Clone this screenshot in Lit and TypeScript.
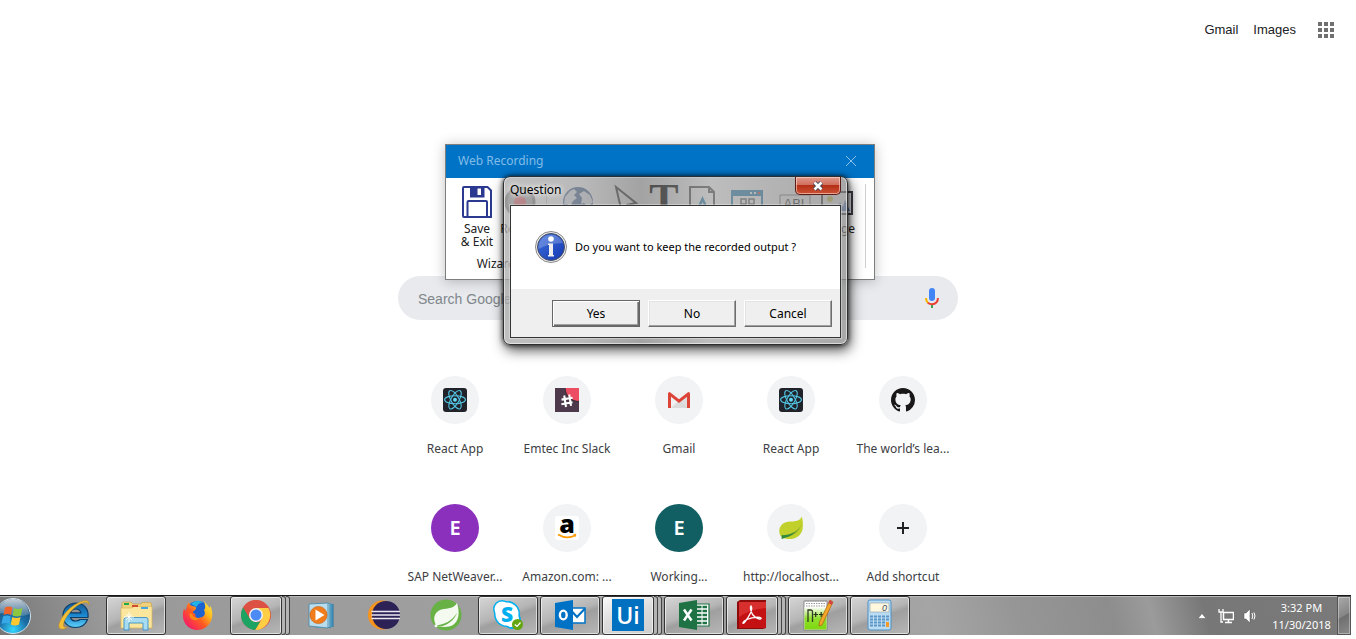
import { LitElement, html, css, svg, nothing } from "lit";
import { customElement, property } from "lit/decorators.js";
import { classMap } from "lit/directives/class-map.js";

/* ---------- shortcut icons ---------- */

const reactIcon = html`<svg width="24" height="24" viewBox="0 0 24 24" aria-hidden="true">
  <rect width="24" height="24" rx="3" fill="#20232a" />
  <g fill="none" stroke="#53c7e6" stroke-width="1.1">
    <ellipse cx="12" cy="11.7" rx="10.4" ry="4" />
    <ellipse cx="12" cy="11.7" rx="10.4" ry="4" transform="rotate(60 12 11.7)" />
    <ellipse cx="12" cy="11.7" rx="10.4" ry="4" transform="rotate(120 12 11.7)" />
  </g>
  <circle cx="12" cy="11.7" r="2" fill="#61dafb" />
</svg>`;

const slackIcon = html`<svg width="24" height="24" viewBox="0 0 24 24" aria-hidden="true">
  <rect width="24" height="24" fill="#4d394b" />
  <path d="M9.800 0H24V14A14 14 0 0 1 9.800 0z" fill="#3a2b39" />
  <path d="M10.600 0H24V13A13.300 13.300 0 0 1 10.600 0z" fill="#ed4d62" />
  <path d="M9.200 7.500 11 19M14.200 6.500 16 17.800M6.500 11.600 17.600 9.700M6.400 16.200 17.500 14.200" stroke="#fff" stroke-width="2.100" fill="none" />
</svg>`;

const gmailIcon = html`<svg width="24" height="24" viewBox="0 0 24 24" aria-hidden="true">
  <path d="M2.500 4.500h19V20h-19z" fill="#f1efef" />
  <path d="M4 20 12 12.500 20 20z" fill="#dcdbdb" />
  <path d="M12 13 21 6v14h-2z" fill="#d3d1d1" opacity=".6" />
  <path d="M1 20V5.500Q1 4 2.700 4L12 11.300 21.300 4Q23 4 23 5.500V20H20V8.800L12 15 4 8.800V20z" fill="#db4437" />
</svg>`;

const githubIcon = html`<svg width="24" height="24" viewBox="0 0 16 16" aria-hidden="true">
  <path fill="#191717" d="M8 0C3.580 0 0 3.580 0 8c0 3.540 2.290 6.530 5.470 7.590.4.070.550-.170.550-.380 0-.190-.010-.820-.010-1.490-2.010.370-2.530-.490-2.690-.940-.090-.230-.480-.940-.820-1.130-.280-.150-.680-.520-.010-.530.630-.010 1.080.580 1.230.820.720 1.210 1.870.870 2.330.660.070-.520.280-.870.510-1.070-1.780-.2-3.640-.890-3.640-3.950 0-.870.310-1.590.820-2.150-.080-.2-.360-1.020.080-2.120 0 0 .670-.210 2.200.820.640-.180 1.320-.270 2-.270s1.360.090 2 .270c1.530-1.040 2.200-.820 2.200-.820.440 1.100.160 1.920.080 2.120.510.560.820 1.270.820 2.150 0 3.070-1.870 3.750-3.650 3.950.290.250.540.730.540 1.480 0 1.070-.010 1.930-.010 2.200 0 .210.150.460.550.380A8.010 8.010 0 0 0 16 8c0-4.420-3.580-8-8-8z" />
</svg>`;

const amazonIcon = html`<svg width="24" height="24" viewBox="0 0 24 24" aria-hidden="true">
  <rect width="24" height="24" rx="3" fill="#fff" />
  <text x="12" y="16.500" text-anchor="middle" font-family="Open Sans, sans-serif" font-weight="800" font-size="25" fill="#000">a</text>
  <path d="M3 18.500Q12 23.800 20 19.500" stroke="#ff9900" stroke-width="1.700" fill="none" />
  <path d="M17.500 18.300Q20.500 17.300 21.300 18 21.400 20 19.800 21.500 20.400 19.600 20 19z" fill="#ff9900" />
</svg>`;

const leafIcon = html`<svg width="24" height="24" viewBox="0 0 24 24" aria-hidden="true">
  <path d="M22.800.500C21 5 17 5.300 9 5.800 3 6.400-.300 11.500.400 16.500 1 20 3 22.300 8 22.900 15 24 21.500 20.500 23.400 14 24.500 9 23.800 4 22.800.500z" fill="#c1d02b" />
  <path d="M23.500 6C22 12 15.500 18.800 3.400 19.200L2.600 22.800 6.400 21.300C14.500 20.500 21 14.500 23.500 6z" fill="#6e9b2c" />
  <path d="M2.500 19.300C9.500 19.500 13 17.500 15.500 16 12 20 8 21.400 2.800 22.900z" fill="#2e8b3d" />
</svg>`;

const plusIcon = html`<svg width="24" height="24" viewBox="0 0 24 24" aria-hidden="true">
  <path d="M6 12H18M12 6V18" stroke="#202124" stroke-width="2" />
</svg>`;

/* ---------- taskbar icons ---------- */

const ieIcon = html`<svg width="32" height="32" viewBox="0 0 32 32" aria-hidden="true">
  <defs><linearGradient id="ie" x1="0" y1="0" x2="0" y2="1"><stop offset="0" stop-color="#17598f" /><stop offset=".5" stop-color="#1a87d0" /><stop offset="1" stop-color="#5fd0f8" /></linearGradient></defs>
  <path d="M30 18.500H12.500Q13.500 22 17.500 22 20.500 22 22 20.500H29.500C27.500 26 23 28.500 17.500 28.500 10 28.500 5 23.500 5 16.500S10.500 4 18 4 31 9.500 30 18.500zM12.500 13.800H23Q22 10 17.700 10T12.500 13.800z" fill="url(#ie)" stroke="#0d3c66" stroke-width="1.200" />
  <path d="M31 6C31.500 1 27 .300 20 4 9 9 0 22.500 1 28 2 31.500 7 30 9.500 28 6 28.800 4.200 27.500 6 23 8.500 16 16 8 22 5 27 2.500 30 2.500 31 6z" fill="#f2bf37" stroke="#c98c12" stroke-width=".5" />
</svg>`;

const explorerIcon = html`<svg width="32" height="32" viewBox="0 0 32 32" aria-hidden="true">
  <path d="M2 8V4.500Q2 3 3.500 3H11L13 5H21L22 3.500H30Q31.500 3.500 31.500 5V28H2z" fill="#f1d27c" stroke="#c7a24b" stroke-width=".7" />
  <path d="M1 9H12L14 7.500H32V29H1z" fill="#fae79d" stroke="#d9b65b" stroke-width=".7" />
  <path d="M4 4h5v2H4z" fill="#21ab48" /><path d="M12 6h6v2h-6z" fill="#d34a32" /><path d="M21 8h7v2h-7z" fill="#4aa5dc" />
  <path d="M4 31V20.500Q4 18.500 6 18.500H26Q28 18.500 28 20.500V31H23V24H9V31z" fill="#a7dcf2" stroke="#3f8fc1" stroke-width=".9" />
  <path d="M9 13v10M4 18h10M6 15l6 6M12 15l-6 6" stroke="#fff" stroke-width=".9" />
</svg>`;

const firefoxIcon = html`<svg width="32" height="32" viewBox="0 0 32 32" aria-hidden="true">
  <defs><linearGradient id="ff" x1="1" y1="0" x2="0.100" y2="0.900"><stop offset="0" stop-color="#fff44f" /><stop offset=".35" stop-color="#ffbd1c" /><stop offset=".62" stop-color="#ff5b22" /><stop offset="1" stop-color="#f5156c" /></linearGradient></defs>
  <circle cx="16" cy="14.500" r="12.500" fill="#1e62d2" />
  <path d="M9 5Q14 0 21 3.500 15 4 15 8z" fill="#20b4e8" />
  <path d="M21.500 0C22 4 26 5 27.500 9L28.500 7C34 20 26 31 15.500 31 5 31-2 21 2 9.500L4 12C4.500 9 4.500 6 7 3 7.500 6 9 7 12.500 7.500 15 8 14.500 10.500 11.500 12 10.500 13 11 14.500 13.500 15 12.500 18 15 20 18 18.500 22.500 18.500 24 14 22 11 24.500 9 22.500 4 21.500 0z" fill="url(#ff)" />
  <path d="M10 15Q11.500 19.500 18 18.800 15 23 9.500 20 6.500 17 8 14z" fill="#ff8a16" />
</svg>`;

const chromeIcon = html`<svg width="32" height="32" viewBox="0 0 32 32" aria-hidden="true">
  <circle cx="16" cy="16" r="15" fill="#dd5144" />
  <path d="M16 9H28.500A15 15 0 0 1 15 31L22 19.600z" fill="#ffce44" />
  <path d="M3.200 8.200 9.900 19.500C12 23 17 24.500 20.500 22L15 31A15 15 0 0 1 3.200 8.200z" fill="#1da462" />
  <path d="M3.200 8.200A15 15 0 0 1 28.900 9H16A7 7 0 0 0 9.200 18.400z" fill="#dd5144" />
  <circle cx="16" cy="16" r="7" fill="#f1f1f1" /><circle cx="16" cy="16" r="5.500" fill="#4c8bf5" />
</svg>`;

const mediaIcon = html`<svg width="32" height="32" viewBox="0 0 32 32" aria-hidden="true">
  <path d="M13 5H27V28H13z" fill="#4b9dc8" /><path d="M10 4.500H25V28.500H10z" fill="#a9d9ee" stroke="#3e86b0" stroke-width=".6" />
  <path d="M3 5 22 4V29L3 27z" fill="#b9ddec" stroke="#4585a6" stroke-width=".8" />
  <path d="M24 5V29M27 5V28" stroke="#2b739e" stroke-width="1" />
  <circle cx="12.500" cy="16" r="8.600" fill="#f07c1c" stroke="#c85c0e" stroke-width=".6" />
  <path d="M9.500 10.500 18.500 16 9.500 21.500z" fill="#fff" />
</svg>`;

const eclipseIcon = html`<svg width="32" height="32" viewBox="0 0 32 32" aria-hidden="true">
  <circle cx="14.500" cy="16" r="14.500" fill="#f7941e" />
  <circle cx="18" cy="16" r="14" fill="#2c2255" />
  <path d="M3.500 12.500H32M3.500 16H32M3.500 19.500H32" stroke="#ece9f3" stroke-width="1.700" />
</svg>`;

const springIcon = html`<svg width="32" height="32" viewBox="0 0 32 32" aria-hidden="true">
  <circle cx="16" cy="16" r="15.500" fill="#68b245" />
  <path d="M27 4C30 13 29 22 23 26 18 29 12 27.500 7 27.800 3 22 3 15 9 11.500 15 8.500 23 11 27 4z" fill="#f4faef" />
  <path d="M6 26.500C14 25.500 22 22 27 14 24 22 16 27.500 7 27.800z" fill="#68b245" /><circle cx="6" cy="26.800" r="1.500" fill="#f4faef" />
</svg>`;

const skypeIcon = html`<svg width="32" height="32" viewBox="0 0 32 32" aria-hidden="true">
  <circle cx="10" cy="10" r="9" fill="#00aff0" /><circle cx="20" cy="21" r="9" fill="#00aff0" /><circle cx="15" cy="15" r="13" fill="#00aff0" />
  <circle cx="10" cy="10" r="7.500" fill="#fff" /><circle cx="19.500" cy="20.500" r="7.500" fill="#fff" /><circle cx="15" cy="15" r="11.500" fill="#fff" />
  <text x="15" y="22.500" text-anchor="middle" font-family="Open Sans, sans-serif" font-weight="800" font-size="21" fill="#00aff0">S</text>
  <circle cx="25.500" cy="25.500" r="5.500" fill="#63a60f" /><path d="M22.800 25.500 25 27.500 28.500 23.500" stroke="#fff" stroke-width="1.200" fill="none" />
</svg>`;

const outlookIcon = html`<svg width="32" height="32" viewBox="0 0 32 32" aria-hidden="true">
  <path d="M16 9H31V24H16z" fill="#fff" stroke="#0072c6" stroke-width="1.500" />
  <path d="M17 11.500 23 18 31 9.500" fill="none" stroke="#0072c6" stroke-width="2.200" />
  <path d="M1 4 19 1V31L1 28z" fill="#0072c6" />
  <ellipse cx="9.300" cy="16" rx="3.400" ry="4.400" fill="none" stroke="#fff" stroke-width="2.400" />
</svg>`;

const uiPathIcon = html`<svg width="32" height="32" viewBox="0 0 32 32" aria-hidden="true">
  <rect width="32" height="32" fill="#0070c0" />
  <text x="16" y="25" text-anchor="middle" font-family="Open Sans, sans-serif" font-weight="600" font-size="23" fill="#fff">Ui</text>
</svg>`;

const excelIcon = html`<svg width="32" height="32" viewBox="0 0 32 32" aria-hidden="true">
  <path d="M17 5H31V27H17z" fill="#fff" stroke="#1f7244" stroke-width="1.200" />
  <path d="M19 8H29M19 12H29M19 16H29M19 20H29M19 24H29" stroke="#1f7244" stroke-width="2.400" /><path d="M24 6V26" stroke="#fff" stroke-width="1" />
  <path d="M1 4 19 1V31L1 28z" fill="#1f7244" />
  <path d="M6 10.500 13.500 21.500M13.500 10.500 6 21.500" stroke="#fff" stroke-width="2.500" />
</svg>`;

const acrobatIcon = html`<svg width="32" height="32" viewBox="0 0 32 32" aria-hidden="true">
  <path d="M1 3 4 1H30V29L27 30H1z" fill="#8c0b0b" /><path d="M3 3H30V29H3z" fill="#c41114" /><path d="M3 3H30V9Q14 10 3 18z" fill="#d62f2d" />
  <path d="M15 7C17.500 10 13 18 8.500 23.500 6 26 6 22.500 11 20.500 16 18.500 23 17.500 25 19 26 21 20.500 20.500 16.500 15.500 14.800 12 13.500 8.500 15 7z" fill="none" stroke="#fff" stroke-width="1.300" />
</svg>`;

const notepadIcon = html`<svg width="32" height="32" viewBox="0 0 32 32" aria-hidden="true">
  <path d="M2 2H25V31H2z" fill="#fff" stroke="#777" stroke-width=".8" />
  <defs><linearGradient id="np" x1="0" y1="0" x2="0" y2="1"><stop offset="0" stop-color="#fff" /><stop offset=".5" stop-color="#8fe02c" /><stop offset="1" stop-color="#7ed810" /></linearGradient></defs>
  <path d="M2.500 8H24.500V30.500H2.500z" fill="url(#np)" />
  <path d="M3 2H25M4 4.500H23M4 7H23" stroke="#999" stroke-width="1" stroke-dasharray="1.500 1" />
  <path d="M6 23V11H9Q10.500 11 10.500 13V23" fill="none" stroke="#313b22" stroke-width="1.300" /><path d="M11.500 15.500H16M13.700 13V18M17 15.500H21.500M19.200 13V18" stroke="#27301c" stroke-width="1.200" />
  <path d="M28 1 31 3 20 26 17 27 17.500 23z" fill="#f4a62a" stroke="#a46213" stroke-width=".7" /><path d="M28 1 31 3 29.500 6 26.500 4z" fill="#d44343" />
</svg>`;

const calcIcon = html`<svg width="32" height="32" viewBox="0 0 32 32" aria-hidden="true">
  <rect x="4" y="1" width="23" height="30" rx="2" fill="#b9dcf3" stroke="#4e8fc2" />
  <rect x="6" y="4" width="19" height="9" fill="#fff8df" stroke="#8c9daa" stroke-width=".6" />
  <text x="23" y="12" text-anchor="end" font-family="Liberation Sans, sans-serif" font-size="9" font-style="italic" fill="#3c4c62">0</text>
  <g stroke="#5c95c6" stroke-width="2" stroke-dasharray="3 1"><path d="M6 17.500H25M6 20.500H25M6 23.500H21M6 26.500H21" /></g>
  <path d="M22 23H25V28H22z" fill="#f29a2e" />
</svg>`;

const orb = html`<svg class="orb" width="36" height="36" viewBox="0 0 36 36" aria-hidden="true">
  <defs>
    <radialGradient id="orb" cx=".5" cy=".9" r=".9"><stop offset="0" stop-color="#34d8ff" /><stop offset=".45" stop-color="#1b6fa8" /><stop offset="1" stop-color="#1c3f62" /></radialGradient>
    <linearGradient id="shine" x1="0" y1="0" x2="0" y2="1"><stop offset="0" stop-color="#fff" stop-opacity=".75" /><stop offset="1" stop-color="#fff" stop-opacity=".15" /></linearGradient>
  </defs>
  <circle cx="18" cy="18" r="17.500" fill="url(#orb)" stroke="#d2e5ee" stroke-width="1" />
  <path d="M2 16A16 15 0 0 1 34 16Q26 20 18 17T2 16z" fill="url(#shine)" />
  <path d="M10 9.500Q13.500 7.500 17.500 9.500L16 17Q12.500 15 8.500 17z" fill="#f0632a" />
  <path d="M19 10Q23 12 27.500 10L26 17.500Q22 19.500 17.500 17.500z" fill="#8dc63f" />
  <path d="M8 18.500Q12 16.500 15.700 18.500L14.300 26Q11 24 6.500 26z" fill="#38a9e8" />
  <path d="M17.300 19Q21 21 25.500 19L24 26.500Q20 28.500 15.800 26.500z" fill="#fdc92f" />
</svg>`;

/* ---------- data ---------- */

interface Shortcut { label: string; icon?: unknown; letter?: string; tone?: string; }

const shortcuts: Shortcut[] = [
  { label: "React App", icon: reactIcon },
  { label: "Emtec Inc Slack", icon: slackIcon },
  { label: "Gmail", icon: gmailIcon },
  { label: "React App", icon: reactIcon },
  { label: "The world’s lea...", icon: githubIcon },
  { label: "SAP NetWeaver...", letter: "E", tone: "purple" },
  { label: "Amazon.com: ...", icon: amazonIcon },
  { label: "Working...", letter: "E", tone: "teal" },
  { label: "http://localhost...", icon: leafIcon },
  { label: "Add shortcut", icon: plusIcon },
];

interface Task { name: string; icon: unknown; open?: boolean; stacked?: boolean; active?: boolean; }

const tasks: Task[] = [
  { name: "Internet Explorer", icon: ieIcon },
  { name: "Windows Explorer", icon: explorerIcon, open: true },
  { name: "Firefox", icon: firefoxIcon },
  { name: "Chrome", icon: chromeIcon, open: true, stacked: true },
  { name: "Media Player", icon: mediaIcon },
  { name: "Eclipse", icon: eclipseIcon },
  { name: "Spring Tool Suite", icon: springIcon },
  { name: "Skype", icon: skypeIcon, open: true },
  { name: "Outlook", icon: outlookIcon, open: true },
  { name: "UiPath", icon: uiPathIcon, open: true, stacked: true, active: true },
  { name: "Excel", icon: excelIcon, open: true },
  { name: "Acrobat Reader", icon: acrobatIcon, open: true, stacked: true },
  { name: "Notepad++", icon: notepadIcon, open: true },
  { name: "Calculator", icon: calcIcon, open: true },
];

/* ---------- new tab page ---------- */

@customElement("new-tab-page")
class NewTabPage extends LitElement {
  static styles = css`
    :host { display: block; font-family: "Noto Sans", "Open Sans", sans-serif; }
    .top { display: flex; justify-content: flex-end; align-items: center; height: 60px; padding-right: 20px; box-sizing: border-box; font: 13px "Liberation Sans", Arial, sans-serif; }
    .top a { color: #202124; text-decoration: none; margin-right: 15px; padding-bottom: 2px; }
    .apps { border: 0; background: none; padding: 0; margin-left: 5px; width: 20px; height: 20px; display: grid; place-items: center; }
    .body { width: 560px; max-width: 100%; margin: 0 auto; padding-top: 216px; }
    .search { display: flex; align-items: center; height: 44px; border-radius: 22px; background: #e8eaed; padding: 0 14px 0 20px; }
    .search input { flex: 1; min-width: 0; border: 0; padding: 2px 0 0; background: none; outline: 0; font: 14px "Liberation Sans", Arial, sans-serif; color: #202124; }
    .search input::placeholder { color: #80868b; opacity: 1; }
    .mic { border: 0; background: none; padding: 0; width: 24px; height: 24px; }
    .tiles { display: grid; grid-template-columns: repeat(5, 1fr); row-gap: 16px; margin: 56px -1px 0 1px; }
    .tile { display: flex; flex-direction: column; align-items: center; height: 112px; text-decoration: none; color: #3c4043; font-size: 12px; line-height: 18px; white-space: nowrap; }
    .disc { display: grid; place-items: center; width: 48px; height: 48px; border-radius: 50%; background: #f1f3f4; margin-bottom: 16px; color: #fff; font-size: 20px; font-weight: 600; }
    .disc svg { display: block; overflow: visible; }
    .purple { background: #8a30bd; }
    .teal { background: #115f63; }
  `;
  render() {
    return html`
      <nav class="top">
        <a href="#gmail">Gmail</a><a href="#images">Images</a>
        <button class="apps" aria-label="Apps">
          <svg width="16" height="16" viewBox="0 0 16 16" fill="#707070">
            ${[0, 6, 12].map((y) => [0, 6, 12].map((x) => svg`<rect x=${x} y=${y} width="4" height="4" />`))}
          </svg>
        </button>
      </nav>
      <div class="body">
        <form class="search" role="search">
          <input type="text" aria-label="Search" placeholder="Search Google or type a URL" />
          <button class="mic" type="button" aria-label="Voice search">
            <svg width="24" height="24" viewBox="0 0 24 24">
              <rect x="9" y="2" width="6" height="13" rx="3" fill="#4285f4" />
              <path d="M11 18.500H13V22H11z" fill="#34a853" />
              <path d="M5 12H7Q7 14.500 8.500 16L7.100 17.400Q5 15.300 5 12z" fill="#f4b400" />
              <path d="M8.500 16Q10 17.200 12 17.200 16.700 17 17 12H19Q18.800 19 12 19.200 9.300 19 7.100 17.400z" fill="#ea4335" />
            </svg>
          </button>
        </form>
        <div class="tiles">
          ${shortcuts.map((s) => html`
            <a class="tile" href="#shortcut">
              <span class=${classMap({ disc: true, purple: s.tone === "purple", teal: s.tone === "teal" })}>${s.letter ?? s.icon}</span>
              <span>${s.label}</span>
            </a>`)}
        </div>
      </div>`;
  }
}

/* ---------- recorder window ---------- */

@customElement("recorder-window")
class RecorderWindow extends LitElement {
  static styles = css`
    :host { display: block; border: 1px solid #7e7e7e; background: #fff; box-shadow: 0 1px 12px rgba(0, 0, 0, 0.25); font: 12px/13px "Noto Sans", "Open Sans", sans-serif; color: #222; }
    .title { display: flex; align-items: center; justify-content: space-between; height: 33px; padding: 0 16px 2px 12px; box-sizing: border-box; background: #0173c7; color: #82bce6; }
    .close { border: 0; padding: 0; background: none; width: 14px; height: 14px; display: grid; place-items: center; }
    .ribbon { display: flex; padding: 6px 8px 11px 0; }
    .tools { flex: 1; display: grid; grid-template-columns: 62px 24px 18px 56px 40px 36px 40px 50px 46px 38px 1fr; height: 84px; border-right: 1px solid #cfcfcf; align-content: start; }
    .tool { display: flex; flex-direction: column; align-items: center; border: 0; padding: 0; background: none; font: inherit; color: inherit; }
    .tool svg { display: block; flex: none; overflow: visible; margin: 2px 0 4px; }
    .rule { width: 1px; height: 60px; margin-left: 14px; background: #ccc; }
    .group { grid-column: 1 / 5; width: 100px; margin-top: 9px; text-align: center; }
  `;
  render() {
    return html`
      <div class="title">
        <span>Web Recording</span>
        <button class="close" aria-label="Close"><svg width="12" height="12" viewBox="0 0 12 12"><path d="M1 1 11 11M11 1 1 11" stroke="#8ac2ea" /></svg></button>
      </div>
      <div class="ribbon">
        <div class="tools">
          <button class="tool">
            <svg width="30" height="32" viewBox="1 0 30 32" fill="none" stroke="#2b3990" stroke-width="2">
              <path d="M3 1H26.500L30 4.500V31H3Q2 31 2 30V2Q2 1 3 1z" /><path d="M6.500 31V16Q6.500 15 7.500 15H25Q26 15 26 16V31" />
              <path d="M10 1H22.500V10.500H10z" fill="#2b3990" /><path d="M16.500 2.500H20V9H16.500z" fill="#fff" stroke="none" />
            </svg>
            <span>Save<br />&amp; Exit</span>
          </button>
          <button class="tool">
            <svg width="32" height="32" viewBox="0 0 32 32"><circle cx="16" cy="16" r="14" fill="#999" stroke="#666" stroke-width="3" /><circle cx="16" cy="16" r="6" fill="#e2333d" /></svg>
            <span>Record</span>
          </button>
          <span class="rule"></span>
          <button class="tool" aria-label="Open Browser">
            <svg width="32" height="32" viewBox="0 0 32 32"><circle cx="16" cy="16" r="15" fill="#3f5f90" /><path d="M3 11 8 5 12 3 15 6 12 9 15 12 11 15 8 21 5 18 2 18zM17 8 22 5 28 9 31 16 26 21 22 17 19 18 20 12zM12 22 18 21 20 26 16 31 12 27z" fill="#dfe5ee" /></svg>
          </button>
          <button class="tool" aria-label="Click">
            <svg width="24" height="32" viewBox="0 0 24 32"><path d="M2 1 22 17 13 19 8 27z" fill="none" stroke="#444" stroke-width="2" /></svg>
          </button>
          <button class="tool" aria-label="Type">
            <svg width="28" height="32" viewBox="0 0 28 32"><text x="14" y="28" text-anchor="middle" font-family="Liberation Serif, serif" font-weight="700" font-size="44" fill="#000">T</text></svg>
          </button>
          <button class="tool" aria-label="Copy">
            <svg width="26" height="32" viewBox="0 0 26 32"><path d="M1 1H20L25 6V31H1zM20 1V6H25" fill="none" stroke="#444" stroke-width="2" /><path d="M8 25 13.500 13 19 25M10 20H17" fill="none" stroke="#1978ad" stroke-width="2.500" /></svg>
          </button>
          <button class="tool" aria-label="Element">
            <svg width="32" height="32" viewBox="0 2 32 32"><path d="M1 7H31V31H1z" fill="#fff" stroke="#1978ad" stroke-width="2" /><path d="M1 7H31V12H1z" fill="#1978ad" /><path d="M19 9H21M23 9H25" stroke="#fff" stroke-width="2" /><path d="M27 9H29" stroke="#e33" stroke-width="2" /><path d="M10 15H15V20H10zM18 15H23V20H18zM10 24H15V29H10zM18 24H23V29H18z" fill="none" stroke="#555" stroke-width="1.500" /></svg>
          </button>
          <button class="tool" aria-label="Text">
            <svg width="32" height="32" viewBox="0 0 32 32"><path d="M1 9H31V31H1z" fill="none" stroke="#777" /><text x="15" y="22" text-anchor="middle" font-family="Liberation Sans, sans-serif" font-size="13" fill="#222">ABI</text></svg>
          </button>
          <button class="tool">
            <svg width="32" height="32" viewBox="0 0 32 32"><path d="M1 6H31V28H1z" fill="#fff" stroke="#3f3f4a" stroke-width="2" /><path d="M16 25 19 16 22 21 24 14 29 25z" fill="#5d7fc8" /><circle cx="9" cy="13" r="3" fill="#d6cf4c" /></svg>
            <span>Image</span>
          </button>
          <span class="group">Wizard</span>
        </div>
      </div>`;
  }
}

/* ---------- question dialog ---------- */

@customElement("question-dialog")
class QuestionDialog extends LitElement {
  static styles = css`
    :host { display: block; box-sizing: border-box; padding: 0 6px 6px; border: 1px solid #2f2f2f; border-radius: 7px; box-shadow: inset 0 0 0 1px rgba(255, 255, 255, 0.55), 0 0 5px rgba(0, 0, 0, 0.8), 2px 5px 13px rgba(0, 0, 0, 0.7); background: linear-gradient(90deg, rgba(170, 170, 170, 0.75), rgba(150, 150, 150, 0.66) 22%, rgba(115, 115, 115, 0.66) 40%, rgba(155, 155, 155, 0.66) 60%, rgba(135, 135, 135, 0.72)); font: 12px/16px "Noto Sans", "Open Sans", sans-serif; color: #000; }
    .title { display: flex; justify-content: space-between; align-items: flex-start; height: 28px; }
    .title span { padding-top: 5px; text-shadow: 0 0 5px #fff, 0 0 6px #fff; }
    .close { display: grid; place-items: center; width: 46px; height: 18px; padding: 0; border: 1px solid #571d16; border-top: 0; border-radius: 0 0 5px 5px; box-shadow: inset 0 0 0 1px rgba(255, 220, 210, 0.6); background: linear-gradient(#e09a8c, #d2705e 45%, #b52f17 50%, #cb5334); }
    .client { border: 1px solid #333; background: #efefef; box-shadow: 0 0 0 1px rgba(255, 255, 255, 0.35); }
    .message { display: flex; align-items: center; gap: 8px; height: 83px; padding: 0 0 2px 24px; box-sizing: border-box; background: #fff; font-size: 11px; }
    .actions { display: flex; justify-content: flex-end; gap: 8px; padding: 11px 8px 10px; }
    .action { width: 88px; height: 27px; padding: 0; font: inherit; color: #000; background: #efefef; border: 1px solid; border-color: #fff #6d6d6d #6d6d6d #fff; border-radius: 0; box-shadow: inset -1px -1px #a0a0a0, inset 1px 1px #e3e3e3; }
    .primary { border-color: #666; box-shadow: inset 1px 1px #fff, inset -1px -1px #696969, inset -2px -2px #a0a0a0; }
  `;
  render() {
    return html`
      <div class="title">
        <span id="caption">Question</span>
        <button class="close" aria-label="Close">
          <svg width="14" height="12" viewBox="0 0 14 12"><path d="M3.500 2.500 10.500 9.500M10.500 2.500 3.500 9.500" stroke="#454b5c" stroke-width="4.500" /><path d="M3.500 2.500 10.500 9.500M10.500 2.500 3.500 9.500" stroke="#fff" stroke-width="2.500" /></svg>
        </button>
      </div>
      <div class="client" role="dialog" aria-labelledby="caption">
        <div class="message">
          <svg width="32" height="32" viewBox="0 0 32 32" aria-hidden="true">
            <defs><linearGradient id="info" x1="0" y1="0" x2="1" y2="1"><stop offset="0" stop-color="#3e70dc" /><stop offset="1" stop-color="#1238b2" /></linearGradient></defs>
            <circle cx="16" cy="16" r="15.500" fill="#eee" stroke="#888" /><circle cx="16" cy="16" r="13.500" fill="url(#info)" stroke="#4a4f60" />
            <path d="M3.500 18A12.700 12.700 0 0 1 28 12Q14 12 3.500 18z" fill="#fff" opacity=".22" />
            <circle cx="16" cy="8" r="2.800" fill="#fff" /><path d="M13 12.500H18V24H19V25.500H13V24H14V14H13z" fill="#eee" />
          </svg>
          <span>Do you want to keep the recorded output ?</span>
        </div>
        <div class="actions">
          <button class="action primary">Yes</button>
          <button class="action">No</button>
          <button class="action">Cancel</button>
        </div>
      </div>`;
  }
}

/* ---------- taskbar ---------- */

@customElement("task-bar")
class TaskBar extends LitElement {
  @property({ attribute: false }) items: Task[] = tasks;

  static styles = css`
    :host { display: flex; align-items: stretch; height: 40px; box-sizing: border-box; border-top: 1px solid #17171b; box-shadow: inset 0 1px #b9b9b9; overflow: hidden; color: #fff; font: 11px/17px "Noto Sans", "Open Sans", sans-serif; background: linear-gradient(75deg, #777 0, #999 8%, #a0a0a0 40%, #9b9b9b 60%, #a5a5a5 69%, #969696 75%, #8d8d8d 82%, #9b9b9b 85%, #777 89%, #7a7a7a 100%); }
    .start { border: 0; padding: 0; background: none; width: 44px; display: flex; align-items: center; justify-content: flex-start; }
    .orb { flex: none; margin-left: -5px; }
    .tasks { flex: 1; display: flex; gap: 2px; min-width: 0; }
    .slot { flex: none; width: 60px; display: flex; }
    .task { flex: 1; display: grid; place-items: center; padding: 0 0 2px; border: 1px solid transparent; border-radius: 3px; background: none; }
    .task svg { overflow: visible; }
    .open { border-color: #333; box-shadow: inset 0 0 0 1px rgba(255, 255, 255, 0.6); background: linear-gradient(160deg, #d6d6d6, #b5b5b5 45%, #9f9f9f 55%, #b7b7b7); }
    .active { background: linear-gradient(160deg, #fafafa, #dcdcdc 50%, #cdcdcd); }
    .edge { width: 4px; border: solid #444; border-width: 1px 1px 1px 0; border-radius: 0 3px 3px 0; box-sizing: border-box; background: #b4b4b4; }
    .tray { display: flex; align-items: center; gap: 8px; }
    .arrow { margin-right: 4px; }
    .clock { width: 71px; text-align: center; }
    .desktop { width: 14px; padding: 0; border: 1px solid #555; box-shadow: inset 0 0 0 1px rgba(255, 255, 255, 0.35); background: linear-gradient(150deg, #aaa, #858585 50%, #6f6f6f 52%, #8a8a8a); }
  `;
  render() {
    return html`
      <button class="start" aria-label="Start">${orb}</button>
      <div class="tasks">
        ${this.items.map((t) => html`
          <div class="slot">
            <button class=${classMap({ task: true, open: !!t.open, active: !!t.active })} aria-label=${t.name}>${t.icon}</button>
            ${t.stacked ? html`<span class="edge"></span><span class="edge"></span>` : nothing}
          </div>`)}
      </div>
      <div class="tray">
        <svg class="arrow" width="8" height="6" viewBox="0 0 8 6" aria-hidden="true"><path d="M4 .500 8 5.500H0z" fill="#fff" stroke="#444" stroke-width=".4" /></svg>
        <svg width="16" height="16" viewBox="0 0 16 16" fill="none" stroke="#fff" aria-hidden="true"><path d="M5.500 4.500H15.500V11.500H5.500zM10.500 12V14M7 14.500H14" stroke-width="1.500" /><path d="M1 1V4H5V1M3 4V14H5" stroke-width="1.300" /></svg>
        <svg width="16" height="16" viewBox="0 0 16 16" aria-hidden="true"><path d="M2 5H4L8 1V15L4 11H2z" fill="#fff" stroke="#555" stroke-width=".5" /><path d="M10 5Q11.500 8 10 11M12 4.500Q14 8 12 11.500" fill="none" stroke="#fff" /></svg>
        <span class="clock">3:32 PM<br />11/30/2018</span>
      </div>
      <button class="desktop" aria-label="Show desktop"></button>`;
  }
}

/* ---------- desktop ---------- */

@customElement("app-root")
class AppRoot extends LitElement {
  static styles = css`
    :host { display: flex; flex-direction: column; position: relative; min-height: 100vh; box-sizing: border-box; padding-bottom: 4px; background: #fff; overflow: hidden; }
    .page { flex: 1 0 auto; margin-bottom: -24px; }
    .bar { margin-right: 5px; position: relative; }
    .recorder { position: absolute; top: 144px; left: calc(50% - 233px); width: 428px; }
    .dialog { position: absolute; top: 176px; left: calc(50% - 175px); width: 345px; }
  `;
  render() {
    return html`
      <new-tab-page class="page"></new-tab-page>
      <task-bar class="bar"></task-bar>
      <recorder-window class="recorder"></recorder-window>
      <question-dialog class="dialog"></question-dialog>`;
  }
}
